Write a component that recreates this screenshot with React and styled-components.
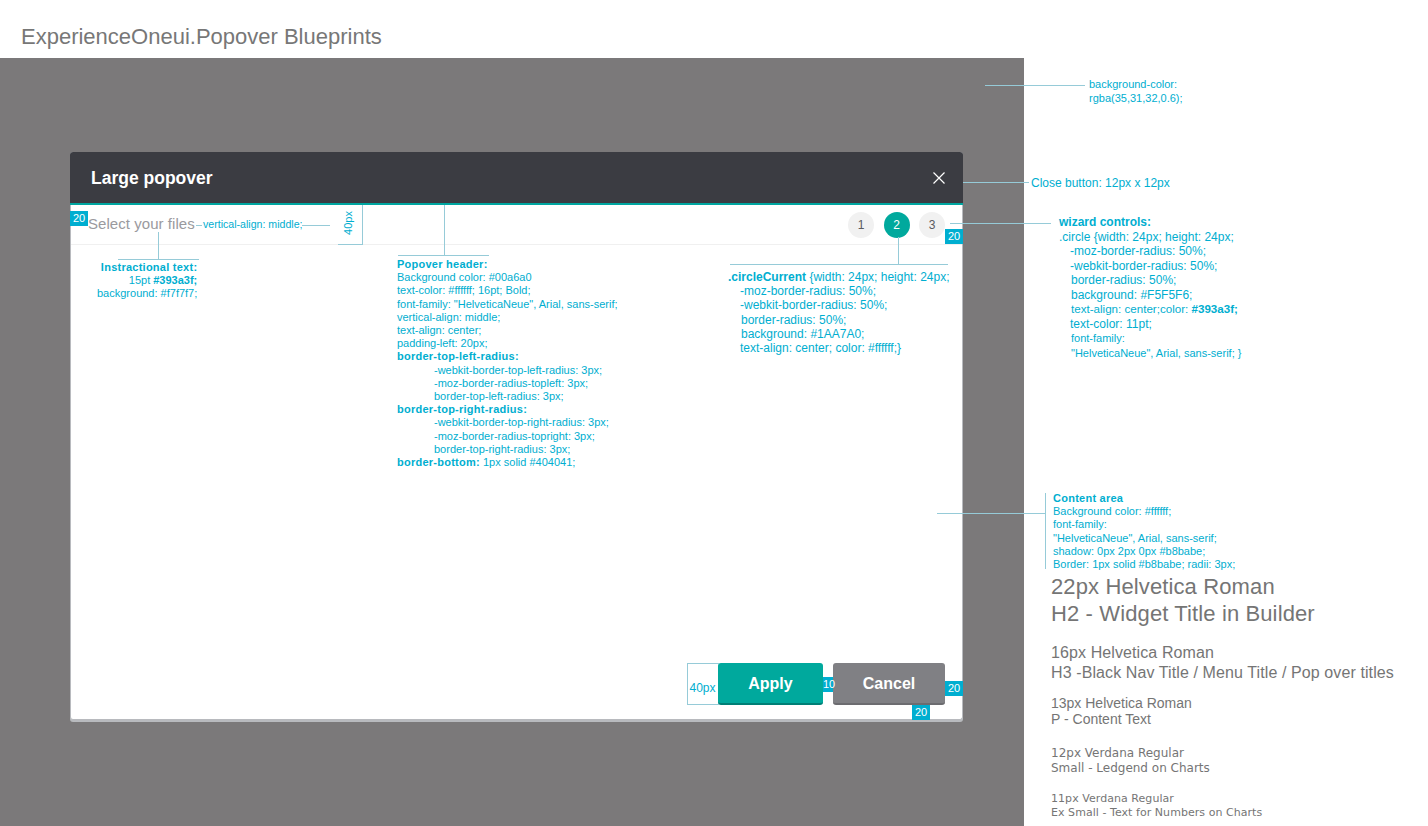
import styled, { createGlobalStyle } from "styled-components";

const GlobalStyle = createGlobalStyle`
  html, body {
    margin: 0;
    padding: 0;
    background: #ffffff;
    overflow: hidden;
  }
  * {
    box-sizing: border-box;
  }
`;

const Page = styled.div`
  position: relative;
  width: 1428px;
  height: 826px;
  overflow: hidden;
  font-family: "Liberation Sans", Arial, sans-serif;
`;
const PageTitle = styled.h1`
  margin: 0;
  height: 58px;
  padding: 24px 0 0 21px;
  font-size: 22px;
  line-height: 26px;
  font-weight: 400;
  color: #777777;
`;
const Body = styled.div`
  display: flex;
  height: 768px;
`;
const Backdrop = styled.div`
  width: 1024px;
  padding: 94px 0 0 70px;
  background: #7b797a;
`;
const Sidebar = styled.div`
  flex: 1;
  padding: 515px 0 0 27px;
  color: #757575;
`;

const Popover = styled.div`
  display: flex;
  flex-direction: column;
  width: 893px;
  height: 568px;
  background: #ffffff;
  border: 1px solid #b8babe;
  border-top: none;
  border-radius: 3px;
  box-shadow: 0 2px 0 #b8babe;
`;
const Header = styled.div`
  display: flex;
  align-items: center;
  justify-content: space-between;
  flex: none;
  height: 53px;
  margin: 0 -1px;
  padding: 0 18px 0 21px;
  background: #3b3c42;
  border-bottom: 2px solid #00a6a0;
  border-radius: 3px 3px 0 0;
`;
const HeaderTitle = styled.h2`
  margin: 1px 0 0;
  font-size: 17.5px;
  font-weight: 700;
  color: #ffffff;
`;
const CloseIcon = styled.svg`
  width: 12px;
  height: 12px;
  stroke: #ffffff;
  stroke-width: 1.2;
`;
const SubHeader = styled.div`
  display: flex;
  align-items: center;
  justify-content: space-between;
  flex: none;
  height: 40px;
  padding: 0 17px;
  border-bottom: 1px solid #f0f0f0;
`;
const Instruction = styled.span`
  padding-bottom: 2px;
  font-size: 15px;
  letter-spacing: 0.05px;
  color: #9a9a9e;
`;
const Steps = styled.div`
  display: flex;
  gap: 9.5px;
`;
const Step = styled.div`
  display: flex;
  align-items: center;
  justify-content: center;
  width: 26px;
  height: 26px;
  border-radius: 50%;
  font-size: 12px;
  color: ${(p) => (p.$current ? "#ffffff" : "#5a5b60")};
  background: ${(p) => (p.$current ? "#00a99d" : "#f1f1f1")};
`;
const Content = styled.div`
  flex: 1;
`;
const Footer = styled.div`
  display: flex;
  justify-content: flex-end;
  gap: 10px;
  padding: 0 17px 14px 0;
`;
const Button = styled.button`
  height: 42px;
  width: ${(p) => p.$width}px;
  padding: 2px 0 0;
  border: none;
  border-radius: 3px;
  font-family: inherit;
  font-size: 16px;
  font-weight: 700;
  color: #ffffff;
  cursor: pointer;
  background: ${(p) => p.$bg};
  border-bottom: 2px solid ${(p) => p.$edge};
`;

const TypeBlock = styled.div`
  margin-bottom: ${(p) => p.$gap}px;
  font-family: ${(p) => (p.$verdana ? '"DejaVu Sans", Verdana, sans-serif' : '"Liberation Sans", Arial, sans-serif')};
  font-size: ${(p) => p.$size}px;
  line-height: ${(p) => p.$line}px;
  letter-spacing: ${(p) => p.$track || 0}px;
`;

/* blueprint annotations, placed on the page like pins on a drawing */
const Note = styled.div`
  position: absolute;
  left: ${(p) => p.$x}px;
  top: ${(p) => p.$y}px;
  font-size: ${(p) => p.$size || 11}px;
  line-height: ${(p) => p.$line}px;
  color: #00aed0;
  white-space: nowrap;
  text-align: ${(p) => (p.$right ? "right" : "left")};
`;
const Row = styled.div`
  padding-left: ${(p) => p.$pad || 0}px;
  font-size: ${(p) => (p.$size ? `${p.$size}px` : "inherit")};
`;
const Strong = styled.b`
  letter-spacing: 0.25px;
`;
const Leader = styled.div`
  position: absolute;
  left: ${(p) => p.$x}px;
  top: ${(p) => p.$y}px;
  width: ${(p) => p.$w || 1}px;
  height: ${(p) => p.$h || 1}px;
  background: #96cbd8;
`;
const MeasureBox = styled.div`
  position: absolute;
  left: 687px;
  top: 663px;
  display: flex;
  align-items: center;
  justify-content: center;
  width: 32px;
  height: 42px;
  border: 1px solid #96cbd8;
  border-right: none;
  padding: 8px 2px 0 0;
  font-size: 12px;
  color: #00aed0;
`;
const RotatedLabel = styled.div`
  position: absolute;
  left: 336px;
  top: 216px;
  width: 24px;
  height: 14px;
  font-size: 11px;
  line-height: 14px;
  text-align: center;
  color: #00aed0;
  transform: rotate(-90deg);
`;
const Badge = styled.div`
  position: absolute;
  left: ${(p) => p.$x}px;
  top: ${(p) => p.$y}px;
  width: ${(p) => p.$w || 18}px;
  height: 15px;
  background: #00aed0;
  color: #ffffff;
  font-size: 11px;
  line-height: 15px;
  text-align: center;
`;

const App = () => {
  return (
    <Page>
      <GlobalStyle />
      <PageTitle>ExperienceOneui.Popover Blueprints</PageTitle>
      <Body>
        <Backdrop>
          <Popover>
            <Header>
              <HeaderTitle>Large popover</HeaderTitle>
              <CloseIcon viewBox="0 0 12 12">
                <path d="M0.5 0.5 L11.5 11.5 M11.5 0.5 L0.5 11.5" />
              </CloseIcon>
            </Header>
            <SubHeader>
              <Instruction>Select your files</Instruction>
              <Steps>
                <Step>1</Step>
                <Step $current>2</Step>
                <Step>3</Step>
              </Steps>
            </SubHeader>
            <Content />
            <Footer>
              <Button $width={105} $bg="#00a99d" $edge="#007f76">Apply</Button>
              <Button $width={112} $bg="#808084" $edge="#6c6c70">Cancel</Button>
            </Footer>
          </Popover>
        </Backdrop>
        <Sidebar>
          <TypeBlock $size={22} $line={27} $gap={16} $track={0.12}>
            <div>22px Helvetica Roman</div>
            <div>H2 - Widget Title in Builder</div>
          </TypeBlock>
          <TypeBlock $size={16} $line={20} $gap={12} $track={0.1}>
            <div>16px Helvetica Roman</div>
            <div>H3 -Black Nav Title / Menu Title / Pop over titles</div>
          </TypeBlock>
          <TypeBlock $size={14} $line={16} $gap={19}>
            <div>13px Helvetica Roman</div>
            <div>P - Content Text</div>
          </TypeBlock>
          <TypeBlock $verdana $size={12} $line={15} $gap={16}>
            <div>12px Verdana Regular</div>
            <div>Small - Ledgend on Charts</div>
          </TypeBlock>
          <TypeBlock $verdana $size={11} $line={14} $gap={0} $track={0.05}>
            <div>11px Verdana Regular</div>
            <div>Ex Small - Text for Numbers on Charts</div>
          </TypeBlock>
        </Sidebar>
      </Body>

      <Leader $x={985} $y={85} $w={100} />
      <Note $x={1089} $y={78} $line={13.5}>
        <Row>background-color:</Row>
        <Row>rgba(35,31,32,0.6);</Row>
      </Note>

      <Leader $x={963} $y={182} $w={66} />
      <Note $x={1031} $y={176} $size={12} $line={14}>Close button: 12px x 12px</Note>

      <Leader $x={950} $y={223} $w={101} />
      <Note $x={1059} $y={215} $size={12} $line={14.5}>
        <Row><b>wizard controls:</b></Row>
        <Row>.circle {"{"}width: 24px; height: 24px;</Row>
        <Row $pad={11}>-moz-border-radius: 50%;</Row>
        <Row $pad={11}>-webkit-border-radius: 50%;</Row>
        <Row $pad={12}>border-radius: 50%;</Row>
        <Row $pad={12}>background: #F5F5F6;</Row>
        <Row $pad={12} $size={11.6}>text-align: center;color: <b>#393a3f;</b></Row>
        <Row $pad={11}>text-color: 11pt;</Row>
        <Row $pad={12} $size={11}>font-family:</Row>
        <Row $pad={12} $size={11}>"HelveticaNeue", Arial, sans-serif; {"}"}</Row>
      </Note>

      <Leader $x={898} $y={237} $h={27} />
      <Leader $x={730} $y={264} $w={218} />
      <Note $x={728} $y={270} $size={12} $line={14.2}>
        <Row><b>.circleCurrent</b> {"{"}width: 24px; height: 24px;</Row>
        <Row $pad={12}>-moz-border-radius: 50%;</Row>
        <Row $pad={12}>-webkit-border-radius: 50%;</Row>
        <Row $pad={13}>border-radius: 50%;</Row>
        <Row $pad={13}>background: #1AA7A0;</Row>
        <Row $pad={12}>text-align: center; color: #ffffff;{"}"}</Row>
      </Note>

      <Leader $x={444} $y={205} $h={50} />
      <Leader $x={398} $y={255} $w={91} />
      <Note $x={397} $y={258} $line={13.2}>
        <Row><Strong>Popover header:</Strong></Row>
        <Row>Background color: #00a6a0</Row>
        <Row>text-color: #ffffff; 16pt; Bold;</Row>
        <Row>font-family: "HelveticaNeue", Arial, sans-serif;</Row>
        <Row>vertical-align: middle;</Row>
        <Row>text-align: center;</Row>
        <Row>padding-left: 20px;</Row>
        <Row><Strong>border-top-left-radius:</Strong></Row>
        <Row $pad={37}>-webkit-border-top-left-radius: 3px;</Row>
        <Row $pad={37}>-moz-border-radius-topleft: 3px;</Row>
        <Row $pad={37}>border-top-left-radius: 3px;</Row>
        <Row><Strong>border-top-right-radius:</Strong></Row>
        <Row $pad={37}>-webkit-border-top-right-radius: 3px;</Row>
        <Row $pad={37}>-moz-border-radius-topright: 3px;</Row>
        <Row $pad={37}>border-top-right-radius: 3px;</Row>
        <Row><Strong>border-bottom:</Strong> 1px solid #404041;</Row>
      </Note>

      <Leader $x={158} $y={232} $h={27} />
      <Leader $x={118} $y={259} $w={81} />
      <Note $x={97} $y={261} $line={13.2} $right>
        <Row><Strong>Instractional text:</Strong></Row>
        <Row>15pt <b>#393a3f;</b></Row>
        <Row>background: #f7f7f7;</Row>
      </Note>

      <Leader $x={196} $y={225} $w={6} />
      <Note $x={203} $y={217} $size={10.6} $line={14}>vertical-align: middle;</Note>
      <Leader $x={302} $y={225} $w={28} />

      <Leader $x={338} $y={244} $w={25} />
      <Leader $x={362} $y={205} $h={39} />
      <RotatedLabel>40px</RotatedLabel>

      <Leader $x={937} $y={513} $w={108} />
      <Leader $x={1045} $y={493} $h={76} />
      <Note $x={1053} $y={492} $line={13.2}>
        <Row><Strong>Content area</Strong></Row>
        <Row>Background color: #ffffff;</Row>
        <Row>font-family:</Row>
        <Row>"HelveticaNeue", Arial, sans-serif;</Row>
        <Row>shadow: 0px 2px 0px #b8babe;</Row>
        <Row>Border: 1px solid #b8babe; radii: 3px;</Row>
      </Note>

      <MeasureBox>40px</MeasureBox>
      <Badge $x={70} $y={211}>20</Badge>
      <Badge $x={945} $y={229}>20</Badge>
      <Badge $x={823} $y={677} $w={10}>10</Badge>
      <Badge $x={945} $y={681}>20</Badge>
      <Badge $x={912} $y={705}>20</Badge>
    </Page>
  );
};

export default App;
